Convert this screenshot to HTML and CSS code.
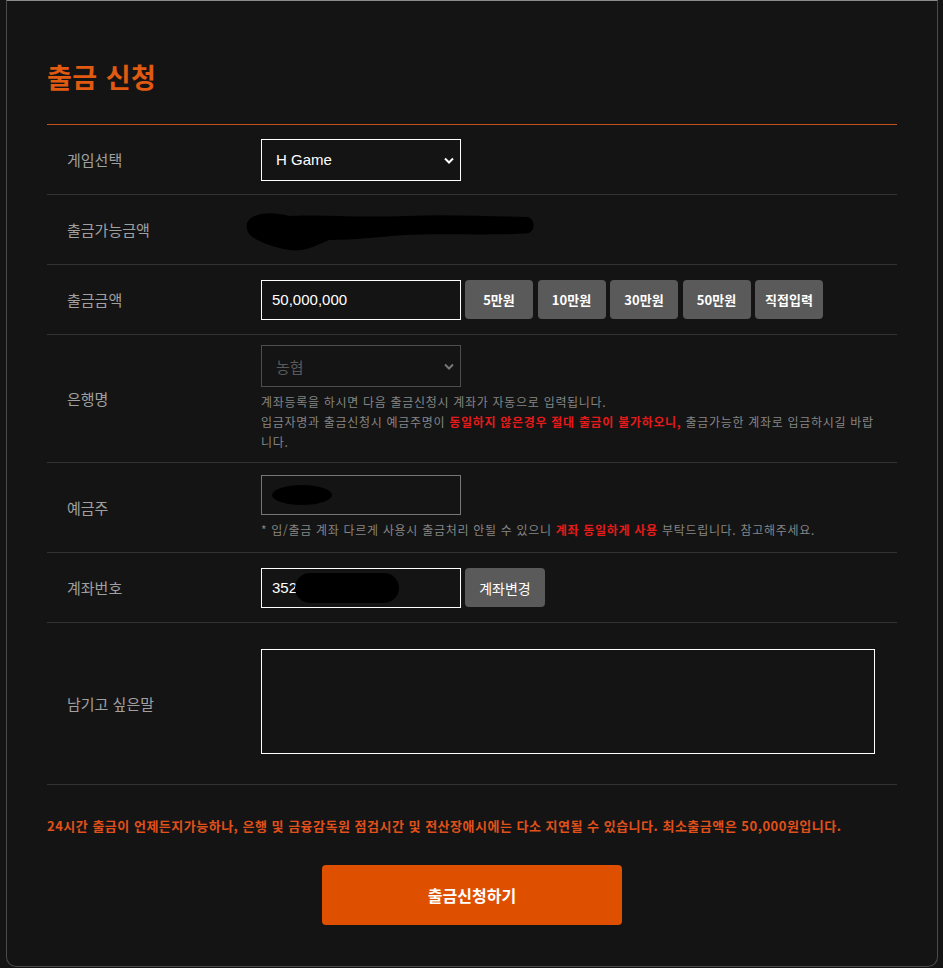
FILE: index.html
```html
<!DOCTYPE html>
<html lang="ko">
<head>
  <title>출금 신청</title>
  <meta charset="UTF-8"/>
  <meta name="viewport" content="width=device-width,initial-scale=1"/>
  <link rel="stylesheet" href="styles.css">
</head>
<body>
<div class="panel">
  <h2 class="title">출금 신청</h2>

  <div class="form">
    <div class="row">
      <div class="label">게임선택</div>
      <div class="field">
        <div class="select-box">
          <select class="select">
            <option>H Game</option>
          </select>
          <svg class="chevron" width="10" height="7" viewBox="0 0 10 7"><path d="M1 1.5 L5 5.5 L9 1.5" fill="none" stroke="#fff" stroke-width="2"/></svg>
        </div>
      </div>
    </div>

    <div class="row">
      <div class="label">출금가능금액</div>
      <div class="field">
        <svg class="scribble-wide" width="292" height="46" viewBox="0 0 292 46">
          <path d="M6 10 C14 4 30 4 44 8 C70 6 110 10 160 8 C200 6 240 8 282 9 C290 10 291 22 284 25 C250 28 200 25 160 27 C130 29 110 32 84 32 C70 38 60 44 44 42 C30 40 14 34 6 28 C0 22 0 14 6 10 Z" fill="#000"/>
        </svg>
      </div>
    </div>

    <div class="row">
      <div class="label">출금금액</div>
      <div class="field">
        <input class="input" type="text" value="50,000,000">
        <div class="chips">
          <button type="button" class="chip">5만원</button>
          <button type="button" class="chip">10만원</button>
          <button type="button" class="chip">30만원</button>
          <button type="button" class="chip">50만원</button>
          <button type="button" class="chip">직접입력</button>
        </div>
      </div>
    </div>

    <div class="row row-tall">
      <div class="label">은행명</div>
      <div class="field field-stack">
        <div class="select-box">
          <select class="select select-off" disabled>
            <option>농협</option>
          </select>
          <svg class="chevron" width="10" height="7" viewBox="0 0 10 7"><path d="M1 1.5 L5 5.5 L9 1.5" fill="none" stroke="#777" stroke-width="2"/></svg>
        </div>
        <p class="help help-bank">계좌등록을 하시면 다음 출금신청시 계좌가 자동으로 입력됩니다.<br>입금자명과 출금신청시 예금주명이 <b class="warn">동일하지 않은경우 절대 출금이 불가하오니,</b> 출금가능한 계좌로 입금하시길 바랍니다.</p>
      </div>
    </div>

    <div class="row row-owner">
      <div class="label">예금주</div>
      <div class="field field-stack">
        <div class="input input-off">
          <span class="blot blot-name"></span>
        </div>
        <p class="help">* 입/출금 계좌 다르게 사용시 출금처리 안될 수 있으니 <b class="warn">계좌 동일하게 사용</b> 부탁드립니다. 참고해주세요.</p>
      </div>
    </div>

    <div class="row">
      <div class="label">계좌번호</div>
      <div class="field">
        <div class="input">352<span class="blot blot-number"></span></div>
        <button type="button" class="chip chip-plain">계좌변경</button>
      </div>
    </div>

    <div class="row row-memo">
      <div class="label">남기고 싶은말</div>
      <div class="field">
        <textarea class="memo"></textarea>
      </div>
    </div>
  </div>

  <p class="notice">24시간 출금이 언제든지가능하나, 은행 및 금융감독원 점검시간 및 전산장애시에는 다소 지연될 수 있습니다. 최소출금액은 50,000원입니다.</p>

  <div class="submit-box">
    <button type="button" class="submit">출금신청하기</button>
  </div>
</div>
</body>
</html>
```

FILE: styles.css
```css
body {
  margin: 0;
  background: #141414;
  font-family: "Noto Sans CJK KR", "Liberation Sans", sans-serif;
}

.panel {
  margin: 0 5px 1px 6px;
  height: 967px;
  box-sizing: border-box;
  padding: 60px 40px 40px;
  border: 1px solid #4a4a4a;
  border-top-color: #8a8a8a;
  border-radius: 0 0 10px 10px;
}

.title {
  margin: 0 0 32px;
  font-size: 27px;
  line-height: 31px;
  font-weight: bold;
  letter-spacing: 0.5px;
  color: #e05a12;
}

.form {
  border-top: 1px solid #c0531c;
}

.row {
  display: flex;
  align-items: center;
  min-height: 69px;
  border-bottom: 1px solid #333;
}

.row-tall {
  min-height: 127px;
}

.row-owner {
  min-height: 89px;
}

.row-memo {
  min-height: 161px;
}

.label {
  width: 194px;
  padding-left: 20px;
  font-size: 15px;
  color: #a0a0a0;
}

.field {
  flex: 1;
  display: flex;
  align-items: center;
  gap: 4px;
}

.field-stack {
  flex-direction: column;
  align-items: flex-start;
  gap: 0;
}

.select-box {
  position: relative;
  width: 200px;
}

.select {
  appearance: none;
  width: 200px;
  height: 42px;
  padding: 0 14px;
  border: 1px solid #fff;
  border-radius: 0;
  background: #141414;
  color: #fff;
  font-family: "Liberation Sans", Arial, sans-serif;
  font-size: 15px;
}

.select-off {
  border-color: #666;
  color: #777;
  font-family: "Noto Sans CJK KR", sans-serif;
}

.chevron {
  position: absolute;
  right: 7px;
  top: 18px;
}

.input {
  box-sizing: border-box;
  display: flex;
  align-items: center;
  width: 200px;
  height: 40px;
  padding: 0 10px;
  border: 1px solid #fff;
  background: #141414;
  color: #fff;
  font-family: "Liberation Sans", Arial, sans-serif;
  font-size: 15px;
  outline: none;
}

.input-off {
  border-color: #777;
}

.blot {
  display: inline-block;
  background: #000;
  border-radius: 50%;
}

.blot-name {
  width: 60px;
  height: 20px;
}

.blot-number {
  width: 104px;
  height: 30px;
  margin-left: -2px;
  border-radius: 15px;
}

.chips {
  display: flex;
  gap: 4.5px;
}

.chip {
  width: 68px;
  height: 39px;
  padding: 0;
  border: none;
  border-radius: 4px;
  background: #5a5a5a;
  color: #fff;
  font-family: "Noto Sans CJK KR", sans-serif;
  font-size: 13px;
  font-weight: bold;
}

.chip-plain {
  width: 80px;
  font-size: 14px;
  font-weight: normal;
}

.scribble-wide {
  margin-left: -16px;
  margin-top: 2px;
}

.help {
  margin: 5px 0 0;
  font-size: 12px;
  line-height: 20px;
  letter-spacing: 0.7px;
  color: #858585;
}

.help-bank {
  max-width: 618px;
}

.warn {
  color: #e51a1a;
}

.memo {
  box-sizing: border-box;
  width: 614px;
  height: 105px;
  margin-top: -5px;
  border: 1px solid #fff;
  background: #141414;
  color: #fff;
  resize: none;
}

.notice {
  margin: 31px 0 29px;
  font-size: 13px;
  line-height: 20px;
  font-weight: bold;
  letter-spacing: 0.5px;
  color: #e0501a;
}

.submit-box {
  text-align: center;
}

.submit {
  width: 300px;
  height: 60px;
  border: none;
  border-radius: 4px;
  background: #df4f00;
  color: #fff;
  font-family: "Noto Sans CJK KR", sans-serif;
  font-size: 16px;
  font-weight: bold;
}
```
